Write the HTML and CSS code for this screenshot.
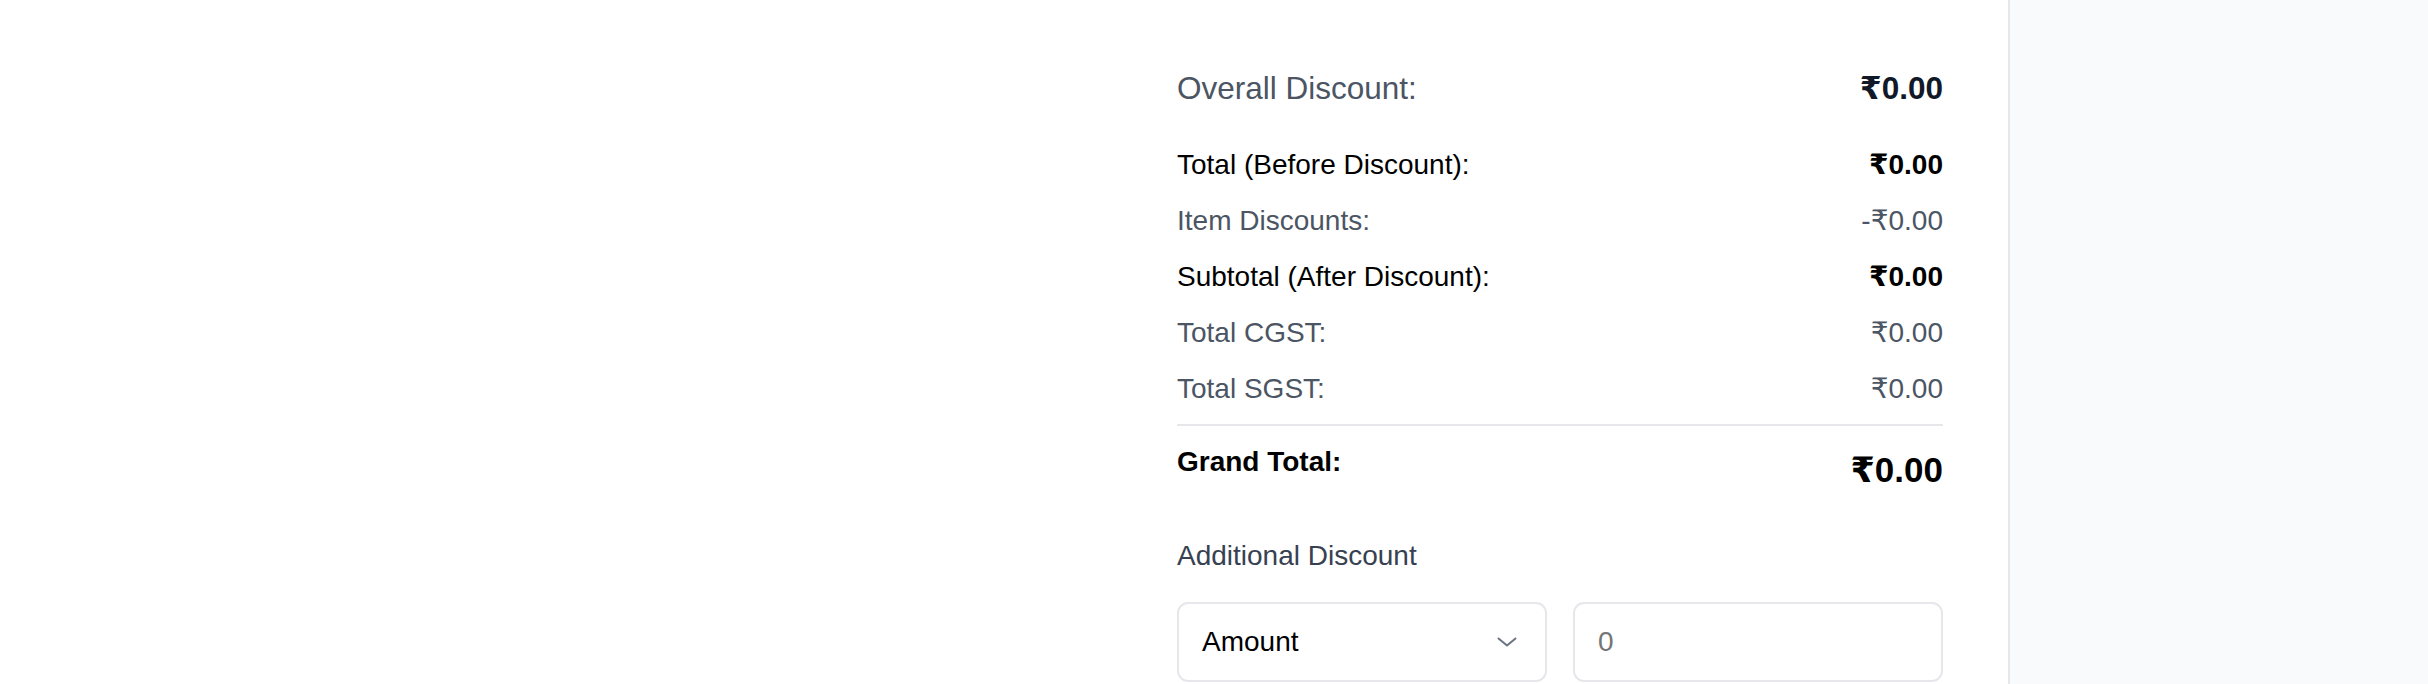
FILE: index.html
```html
<!DOCTYPE html>
<html lang="en">
<head>
<meta charset="utf-8">
<title>Summary</title>
<link rel="stylesheet" href="styles.css">
</head>
<body>
<div class="layout">
  <main class="main">
    <div class="spacer"></div>
    <section class="summary">
      <div class="overall-row">
        <span class="overall-label">Overall Discount:</span>
        <span class="overall-value">₹0.00</span>
      </div>
      <div class="totals">
        <div class="row strong"><span>Total (Before Discount):</span><span class="bold">₹0.00</span></div>
        <div class="row muted"><span>Item Discounts:</span><span>-₹0.00</span></div>
        <div class="row strong"><span>Subtotal (After Discount):</span><span class="bold">₹0.00</span></div>
        <div class="row muted"><span>Total CGST:</span><span>₹0.00</span></div>
        <div class="row muted"><span>Total SGST:</span><span>₹0.00</span></div>
      </div>
      <div class="grand">
        <span class="grand-label">Grand Total:</span>
        <span class="grand-value">₹0.00</span>
      </div>
      <div class="additional">
        <label class="add-label">Additional Discount</label>
        <div class="add-fields">
          <div class="select">
            <span>Amount</span>
            <svg class="chev" width="20" height="10" viewBox="0 0 20 10"><polyline points="1.5,1.5 10,8.5 18.5,1.5" fill="none" stroke="#6b7280" stroke-width="2" stroke-linecap="round" stroke-linejoin="round"/></svg>
          </div>
          <input class="num" type="text" placeholder="0">
        </div>
      </div>
    </section>
  </main>
  <aside class="sidebar"></aside>
</div>
</body>
</html>
```

FILE: styles.css
```css
* { box-sizing: border-box; }
html, body { margin: 0; padding: 0; }
body {
  font-family: "Liberation Sans", Arial, "DejaVu Sans", sans-serif;
  background: #ffffff;
  color: #000000;
}
.layout {
  display: flex;
  height: 684px;
  overflow: hidden;
}
.main {
  flex: 1;
  display: grid;
  grid-template-columns: 1fr 766px;
  padding-right: 65px;
}
.sidebar {
  width: 420px;
  border-left: 2px solid #e5e7eb;
  background: #f9fafb;
}
.summary {
  padding-top: 64px;
  display: flex;
  flex-direction: column;
}
.overall-row {
  display: flex;
  justify-content: space-between;
  align-items: center;
  height: 49px;
  line-height: 49px;
}
.overall-label {
  font-size: 31.5px;
  color: #4b5563;
}
.overall-value {
  font-size: 31.5px;
  font-weight: 700;
  color: #111827;
}
.totals {
  margin-top: 31px;
  display: flex;
  flex-direction: column;
  gap: 14px;
}
.row {
  display: flex;
  justify-content: space-between;
  font-size: 28px;
  line-height: 42px;
}
.row.strong { color: #000000; }
.row.muted { color: #4b5563; }
.bold { font-weight: 700; }
.grand {
  margin-top: 14px;
  border-top: 2px solid #e5e7eb;
  padding-top: 15px;
  display: flex;
  justify-content: space-between;
  align-items: flex-start;
}
.grand-label {
  font-size: 28px;
  line-height: 42px;
  font-weight: 700;
}
.grand-value {
  font-size: 35px;
  line-height: 49px;
  font-weight: 700;
  margin-top: 4px;
}
.additional {
  margin-top: 41px;
  display: flex;
  flex-direction: column;
  gap: 25px;
}
.add-label {
  font-size: 28px;
  line-height: 42px;
  color: #374151;
}
.add-fields {
  display: grid;
  grid-template-columns: 1fr 1fr;
  gap: 26px;
}
.select, .num {
  height: 80px;
  border: 2px solid #e5e7eb;
  border-radius: 11px;
  background: #ffffff;
  font-family: inherit;
  font-size: 28px;
  color: #000000;
}
.select {
  display: flex;
  align-items: center;
  justify-content: space-between;
  padding: 0 28px 0 23px;
}
.num {
  width: 100%;
  padding: 0 23px;
  outline: none;
}
.num::placeholder { color: #757575; }
```
